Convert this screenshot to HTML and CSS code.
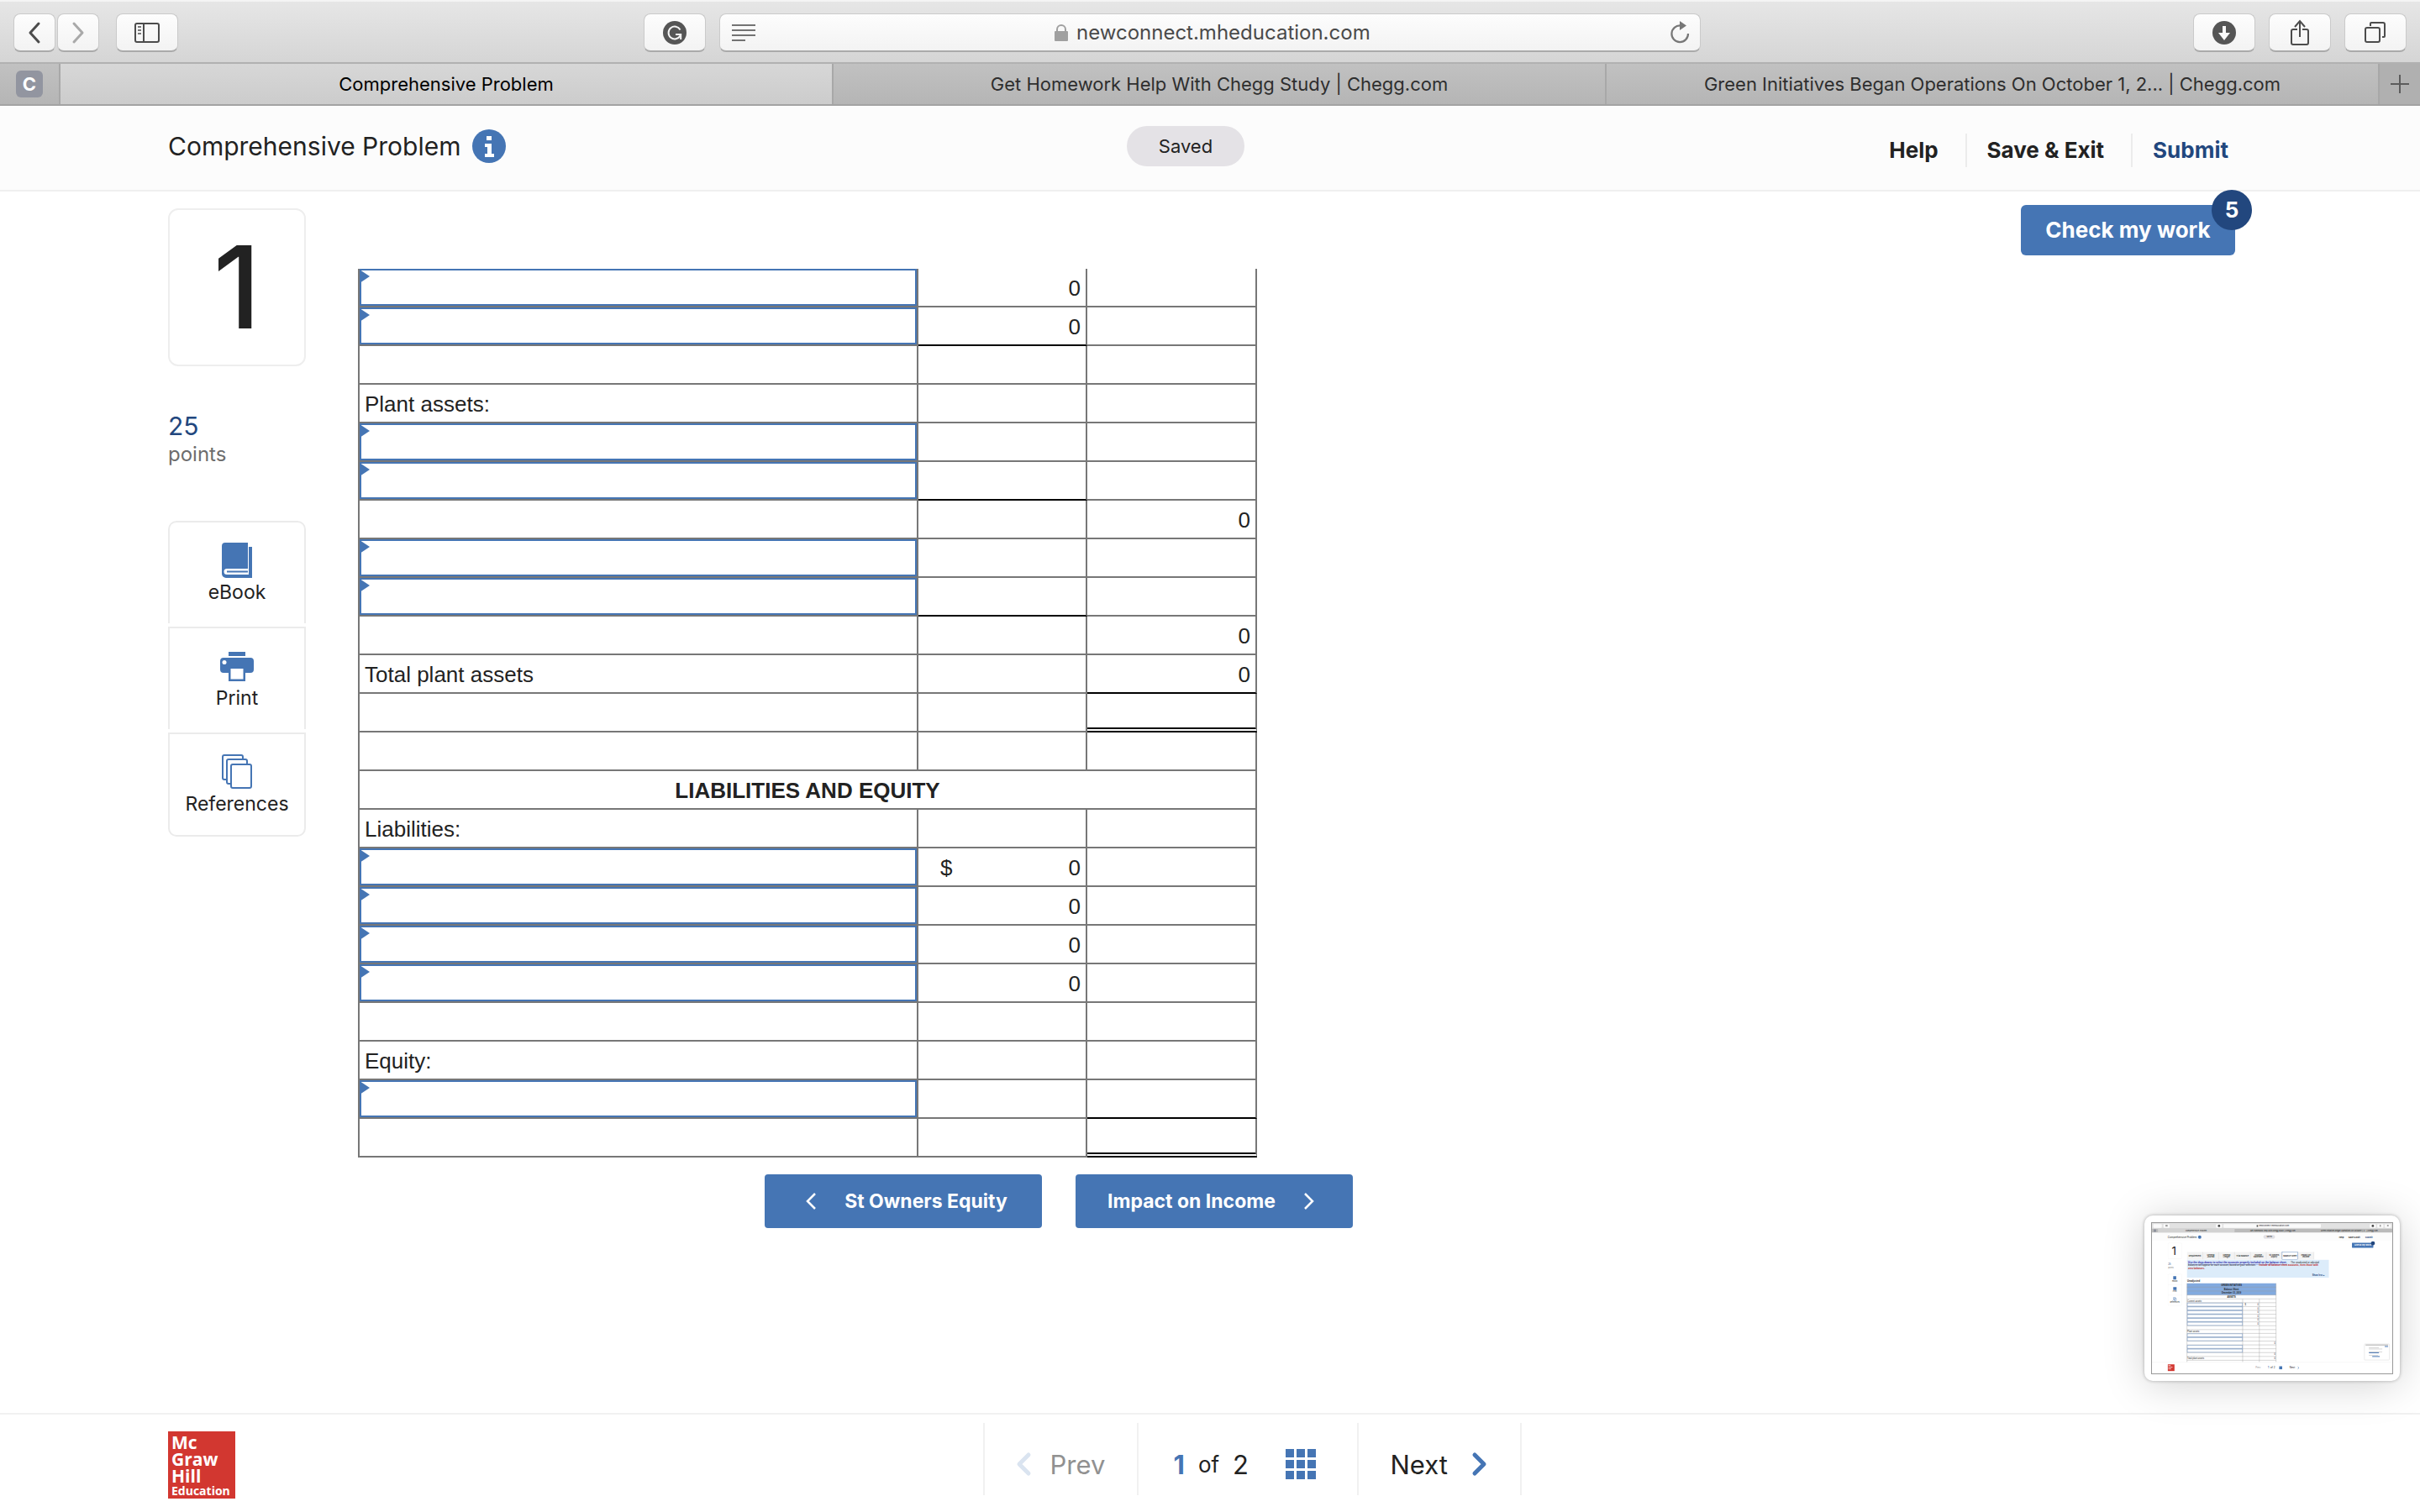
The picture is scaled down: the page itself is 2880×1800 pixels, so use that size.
FILE: index.html
```html
<!DOCTYPE html>
<html lang="en">
<head>
<meta charset="utf-8">
<title>Comprehensive Problem</title>
<link rel="stylesheet" href="styles.css">
</head>
<body>
<div class="toolbar">
  <div class="tools tools-left">
    <div class="history">
      <button class="tool narrow" aria-label="Back"><svg width="50" height="46" viewBox="0 0 50 46"><path d="M30 12 20 23l10 11" fill="none" stroke="#4c4c4c" stroke-width="3" stroke-linecap="round" stroke-linejoin="round"/></svg></button>
      <button class="tool narrow" aria-label="Forward"><svg width="50" height="46" viewBox="0 0 50 46"><path d="M20 12l10 11-10 11" fill="none" stroke="#a9a9a9" stroke-width="3" stroke-linecap="round" stroke-linejoin="round"/></svg></button>
    </div>
    <button class="tool" aria-label="Show sidebar"><svg width="30" height="24" viewBox="0 0 30 24"><rect x="1" y="1" width="28" height="22" rx="2" fill="none" stroke="#4c4c4c" stroke-width="2"/><path d="M11 1v22" stroke="#4c4c4c" stroke-width="2"/><path d="M4 5h4M4 9h4M4 13h4" stroke="#777" stroke-width="2"/></svg></button>
    <button class="tool grammar" aria-label="Grammar check"><svg width="28" height="28" viewBox="0 0 28 28"><circle cx="14" cy="14" r="14" fill="#555"/><path d="M20.500 10.500A7.400 7.400 0 1 0 20.500 17.500M15 16h6.200v6" fill="none" stroke="#f5f5f5" stroke-width="2"/></svg></button>
  </div>
  <div class="address">
    <svg width="30" height="22" viewBox="0 0 30 22"><path d="M0 2h28M0 8h28M0 14h28M0 20h16" stroke="#737373" stroke-width="2"/></svg>
    <label class="site"><svg width="16" height="20" viewBox="0 0 16 20"><path d="M3 9V6a5 5 0 0 1 10 0v3" fill="none" stroke="#a0a0a0" stroke-width="2"/><rect y="8" width="16" height="12" rx="1" fill="#a0a0a0"/></svg><input class="url" type="text" value="newconnect.mheducation.com" aria-label="Address"></label>
    <button class="reload" aria-label="Reload"><svg width="24" height="28" viewBox="0 0 24 28"><path d="M22 15A9.800 9.800 0 1 1 13 5.500" fill="none" stroke="#777" stroke-width="2.200"/><path d="M12 0l8 5.500-8 5.500z" fill="#777"/></svg></button>
  </div>
  <div class="tools tools-right">
    <button class="tool" aria-label="Downloads"><svg width="28" height="28" viewBox="0 0 28 28"><circle cx="14" cy="14" r="14" fill="#555"/><path d="M12 6h4v8h5l-7 9-7-9h5z" fill="#fafafa"/></svg></button>
    <button class="tool" aria-label="Share"><svg width="24" height="32" viewBox="0 0 24 32"><path d="M9 12H4q-2 0-2 2v14q0 2 2 2h16q2 0 2-2V14q0-2-2-2h-5M12 21V3M6 9l6-7 6 7" fill="none" stroke="#4c4c4c" stroke-width="2"/></svg></button>
    <button class="tool" aria-label="Tab overview"><svg width="26" height="26" viewBox="0 0 26 26"><rect x="1" y="7" width="17" height="17" rx="2" fill="none" stroke="#4c4c4c" stroke-width="2"/><path d="M7 5V2q0-1 1-1h14q2 0 2 2v14q0 1-1 1h-2" fill="none" stroke="#4c4c4c" stroke-width="2"/></svg></button>
  </div>
</div>
<nav class="tabs" aria-label="Browser tabs">
  <a class="pinned" href="#"><span>C</span></a>
  <a class="tab active" href="#">Comprehensive Problem</a>
  <a class="tab" href="#">Get Homework Help With Chegg Study | Chegg.com</a>
  <a class="tab" href="#">Green Initiatives Began Operations On October 1, 2... | Chegg.com</a>
  <button class="new-tab" aria-label="New tab"><svg width="22" height="22" viewBox="0 0 22 22"><path d="M11 0v22M0 11h22" stroke="#5c5c5c" stroke-width="2"/></svg></button>
</nav>

<header class="header">
  <h1 class="title">Comprehensive Problem
    <svg width="40" height="40" viewBox="0 0 40 40"><circle cx="20" cy="20" r="20" fill="#4575b4"/><path d="M17 8h6v5h-6zM15 17h8v12h3v4H15v-4h3v-8h-3z" fill="#fff"/></svg>
  </h1>
  <span class="saved">Saved</span>
  <nav class="actions">
    <a href="#">Help</a>
    <a href="#">Save &amp; Exit</a>
    <a class="submit" href="#">Submit</a>
  </nav>
</header>

<main class="main">
  <aside class="side">
    <div class="number">1</div>
    <div class="points"><strong>25</strong><span>points</span></div>
    <nav class="menu">
      <a href="#"><svg width="36" height="42" viewBox="0 0 36 42"><path d="M4 0h27v31H6a3 3 0 0 0 0 7h26V5h4v37H5a5 5 0 0 1-5-5V4a4 4 0 0 1 4-4z" fill="#4575b4"/><path d="M6 34.500h25" stroke="#4575b4" stroke-width="2"/></svg>eBook</a>
      <a href="#"><svg width="40" height="42" viewBox="0 0 40 42"><path d="M10 4h20v5H10zM4 11h32a4 4 0 0 1 4 4v10a4 4 0 0 1-4 4h-6v10H10V29H4a4 4 0 0 1-4-4V15a4 4 0 0 1 4-4z" fill="#4575b4"/><path d="M12.500 24h15v12.500h-15z" fill="#fff"/><circle cx="5" cy="16.500" r="2.500" fill="#fff"/></svg>Print</a>
      <a href="#"><svg width="36" height="42" viewBox="0 0 36 42"><g fill="#fff" stroke="#4575b4" stroke-width="2"><rect x="1" y="1" width="24" height="29" rx="2"/><rect x="6" y="6" width="24" height="29" rx="2"/><rect x="11" y="12" width="24" height="28" rx="2"/></g></svg>References</a>
    </nav>
  </aside>

  <section class="work">
    <table class="sheet">
      <colgroup><col class="account"><col class="amount"><col class="total"></colgroup>
      <tbody>
        <tr><td class="pick"><select aria-label="Current asset account"><option></option></select></td><td class="num">0</td><td></td></tr>
        <tr><td class="pick"><select aria-label="Current asset account"><option></option></select></td><td class="num sum">0</td><td></td></tr>
        <tr><td></td><td></td><td></td></tr>
        <tr><td>Plant assets:</td><td></td><td></td></tr>
        <tr><td class="pick"><select aria-label="Plant asset account"><option></option></select></td><td></td><td></td></tr>
        <tr><td class="pick"><select aria-label="Plant asset account"><option></option></select></td><td class="sum"></td><td></td></tr>
        <tr><td></td><td></td><td class="num">0</td></tr>
        <tr><td class="pick"><select aria-label="Plant asset account"><option></option></select></td><td></td><td></td></tr>
        <tr><td class="pick"><select aria-label="Plant asset account"><option></option></select></td><td class="sum"></td><td></td></tr>
        <tr><td></td><td></td><td class="num">0</td></tr>
        <tr><td>Total plant assets</td><td></td><td class="num sum">0</td></tr>
        <tr><td></td><td></td><td class="grand"></td></tr>
        <tr><td></td><td></td><td></td></tr>
        <tr><th colspan="3">LIABILITIES AND EQUITY</th></tr>
        <tr><td>Liabilities:</td><td></td><td></td></tr>
        <tr><td class="pick"><select aria-label="Liability account"><option></option></select></td><td class="num"><div class="money"><span>$</span><span>0</span></div></td><td></td></tr>
        <tr><td class="pick"><select aria-label="Liability account"><option></option></select></td><td class="num">0</td><td></td></tr>
        <tr><td class="pick"><select aria-label="Liability account"><option></option></select></td><td class="num">0</td><td></td></tr>
        <tr><td class="pick"><select aria-label="Liability account"><option></option></select></td><td class="num">0</td><td></td></tr>
        <tr><td></td><td></td><td></td></tr>
        <tr><td>Equity:</td><td></td><td></td></tr>
        <tr><td class="pick"><select aria-label="Equity account"><option></option></select></td><td></td><td class="sum"></td></tr>
        <tr><td></td><td></td><td class="grand"></td></tr>
      </tbody>
    </table>
    <div class="steps">
      <button class="step back"><svg width="12" height="20" viewBox="0 0 12 20"><path d="M11 1 2 10l9 9" fill="none" stroke="#fff" stroke-width="2.500"/></svg>St Owners Equity</button>
      <button class="step forward">Impact on Income<svg width="12" height="20" viewBox="0 0 12 20"><path d="M1 1l9 9-9 9" fill="none" stroke="#fff" stroke-width="2.500"/></svg></button>
    </div>
  </section>

  <button class="check">Check my work<span class="badge">5</span></button>
</main>

<footer class="footer">
  <div class="logo">Mc<br>Graw<br>Hill<br><small>Education</small></div>
  <nav class="pager">
    <button class="prev" disabled><svg width="20" height="30" viewBox="0 0 20 30"><path d="M16 4 5 15l11 11" fill="none" stroke="#dae4f0" stroke-width="5" stroke-linecap="round" stroke-linejoin="round"/></svg>Prev</button>
    <div class="pages"><strong>1</strong><span class="of">of</span><span>2</span><svg width="36" height="36" viewBox="0 0 36 36"><path d="M0 0h10v10H0zM13 0h10v10H13zM26 0h10v10H26zM0 13h10v10H0zM13 13h10v10H13zM26 13h10v10H26zM0 26h10v10H0zM13 26h10v10H13zM26 26h10v10H26z" fill="#4575b4"/></svg></div>
    <button class="next">Next<svg width="20" height="30" viewBox="0 0 20 30"><path d="M4 4l11 11L4 26" fill="none" stroke="#4575b4" stroke-width="5" stroke-linecap="round" stroke-linejoin="round"/></svg></button>
  </nav>
</footer>

<div class="preview">
  <svg viewBox="0 0 2880 1800" font-family="Inter, sans-serif" font-size="28" fill="#222">
    <rect width="2880" height="1800" fill="#fff"/>
    <rect width="2880" height="66" fill="#e2e2e2"/>
    <rect y="66" width="2880" height="50" fill="#bbb"/>
    <rect x="72" y="66" width="918" height="50" fill="#d2d2d2"/>
    <g fill="#fbfbfb"><rect x="16" y="12" width="102" height="45" rx="8"/><rect x="138" y="12" width="74" height="45" rx="8"/><rect x="767" y="12" width="74" height="45" rx="8"/><rect x="857" y="12" width="1167" height="45" rx="8"/><rect x="2610" y="12" width="74" height="45" rx="8"/><rect x="2700" y="12" width="74" height="45" rx="8"/><rect x="2790" y="12" width="74" height="45" rx="8"/></g>
    <g fill="#444"><circle cx="804" cy="34" r="14"/><circle cx="2647" cy="34" r="14"/><rect x="1255" y="25" width="16" height="20"/><rect x="2728" y="22" width="16" height="22" fill="#999"/><rect x="2818" y="22" width="18" height="18" fill="#999"/><rect x="162" y="22" width="26" height="20" fill="#999"/><rect x="20" y="76" width="30" height="30" fill="#8c909c"/></g>
    <text x="1281" y="45" font-size="25">newconnect.mheducation.com</text>
    <g font-size="22"><text x="402" y="100">Comprehensive Problem</text><text x="1178" y="100">Get Homework Help With Chegg Study | Chegg.com</text><text x="2024" y="100">Green Initiatives Began Operations On October 1, 2... | Chegg.com</text></g>
    <rect y="116" width="2880" height="100" fill="#fcfcfc"/>
    <text x="190" y="180" font-size="30">Comprehensive Problem</text><circle cx="572" cy="168" r="20" fill="#4575b4"/>
    <rect x="1335" y="144" width="140" height="46" rx="23" fill="#e3e1e5"/><text x="1374" y="176" font-size="22">Saved</text>
    <g font-weight="700" font-size="26"><text x="2242" y="183">Help</text><text x="2355" y="183">Save &amp; Exit</text><text x="2555" y="183" fill="#22477e">Submit</text></g>
    <rect x="2397" y="236" width="256" height="60" rx="4" fill="#4575b4"/><text x="2426" y="276" fill="#fff" font-weight="700" font-size="27">Check my work</text><circle cx="2648" cy="242" r="24" fill="#22477e"/>
    <rect x="193" y="240" width="164" height="188" rx="10" fill="none" stroke="#eee" stroke-width="3"/><text x="236" y="384" font-size="136">1</text>
    <text x="193" y="508" fill="#22477e">25</text><text x="193" y="542" font-size="23" fill="#777">points</text>
    <rect x="193" y="612" width="164" height="376" rx="10" fill="none" stroke="#eee" stroke-width="3"/><path d="M193 738h164M193 864h164" stroke="#eee" stroke-width="3"/>
    <path d="M255 638h36v40h-36zM255 768h40v34h-40z" fill="#4575b4"/><path d="M257 892h24v28h-24zM267 902h24v28h-24z" fill="none" stroke="#4575b4" stroke-width="4"/>
    <g font-size="22" text-anchor="middle"><text x="274" y="704">eBook</text><text x="274" y="830">Print</text><text x="274" y="956">References</text></g>
    <path d="M420 347h1520v90H420z" fill="#f3f3f3"/><path d="M610 347v90M800 347v90M990 347v90M1180 347v90M1370 347v90M1560 347v90M1750 347v90M1940 347v90" stroke="#ccc" stroke-width="3"/>
    <rect x="1560" y="347" width="190" height="94" fill="#fff" stroke="#4575b4" stroke-width="4"/>
    <g font-size="24" font-weight="600" text-anchor="middle"><text x="515" y="405">Requirement</text><text x="705" y="388">General</text><text x="705" y="416">Journal</text><text x="895" y="388">General</text><text x="895" y="416">Ledger</text><text x="1085" y="405">Trial Balance</text><text x="1275" y="388">Income</text><text x="1275" y="416">Statement</text><text x="1465" y="388">St Owners</text><text x="1465" y="416">Equity</text><text x="1655" y="405">Balance Sheet</text><text x="1845" y="388">Impact on</text><text x="1845" y="416">Income</text></g>
    <rect x="420" y="441" width="1700" height="214" fill="#dcecfa"/>
    <g font-family="Liberation Sans, sans-serif" font-size="26"><text x="434" y="486" font-size="30" fill="#22a" font-weight="700" text-decoration="underline">Use the drop-downs to select the accounts properly included on the balance sheet.</text><text x="1665" y="486" font-size="28">The unadjusted or adjusted</text><text x="434" y="518" font-size="29">balances will appear for each account, based on your selection.</text><text x="1285" y="518" font-size="29" fill="#b22" font-weight="700">Include all balance sheet accounts, even those with</text><text x="434" y="552" font-size="29" fill="#b22" font-weight="700">zero balances.</text><text x="1920" y="632" fill="#22477e" font-weight="700">Show less▲</text>
    <text x="424" y="700" font-weight="700" font-size="28">Unadjusted</text>
    <path d="M420 723h1067v140H420z" fill="#82aadf"/>
    <g font-weight="700" text-anchor="middle"><text x="953" y="756">GREEN INITIATIVES</text><text x="953" y="802">Balance Sheet</text><text x="953" y="848">December 31, 2019</text><text x="953" y="894">ASSETS</text></g>
    <path d="M420 723V1667M1487 723V1667M1087 909V1667M1287 909V1667M420 769h1067M420 815h1067M420 863h1067M420 909h1067M420 955h1067M420 1001h1067M420 1047h1067M420 1093h1067M420 1139h1067M420 1185h1067M420 1231h1067M420 1277h1067M420 1323h1067M420 1369h1067M420 1415h1067M420 1461h1067M420 1507h1067M420 1553h1067M420 1599h1067M420 1645h1067" fill="none" stroke="#999" stroke-width="4"/>
    <path d="M424 959h660v38H424zM424 1005h660v38H424zM424 1051h660v38H424zM424 1097h660v38H424zM424 1143h660v38H424zM424 1189h660v38H424zM424 1327h660v38H424zM424 1373h660v38H424zM424 1465h660v38H424zM424 1511h660v38H424z" fill="none" stroke="#4575b4" stroke-width="4"/>
    <text x="424" y="942">Current assets:</text><text x="424" y="1310">Plant assets:</text><text x="424" y="1632">Total plant assets</text>
    <text x="1112" y="988">$</text><text x="1264" y="988">0</text><text x="1264" y="1034">0</text><text x="1264" y="1080">0</text><text x="1264" y="1126">0</text><text x="1264" y="1172">0</text><text x="1264" y="1218">0</text><text x="1466" y="1448">0</text><text x="1466" y="1586">0</text><text x="1466" y="1632">0</text></g>
    <rect x="2546" y="1450" width="300" height="192" rx="8" fill="#fff" stroke="#ddd" stroke-width="6"/><path d="M2560 1462h270" stroke="#999" stroke-width="8"/><path d="M2600 1495h120M2600 1510h160M2600 1545h160M2600 1585h110" stroke="#bbb" stroke-width="6"/><path d="M2600 1555h120M2640 1600h90M2790 1480h40" stroke="#4575b4" stroke-width="10"/>
    <path d="M0 1668h2880" stroke="#eee" stroke-width="4"/>
    <rect x="190" y="1694" width="80" height="80" fill="#d23730"/><path d="M196 1708h28M196 1728h50M196 1748h34" stroke="#f3c4c2" stroke-width="10"/>
    <g font-size="30"><text x="1240" y="1746" fill="#999">Prev</text><text x="1390" y="1746" fill="#4575b4" font-weight="700">1</text><text x="1420" y="1746">of 2</text><rect x="1525" y="1717" width="36" height="36" fill="#4575b4"/><text x="1648" y="1746">Next</text></g><path d="M1748 1724l14 12-14 12" fill="none" stroke="#4575b4" stroke-width="6"/>
  </svg>
</div>
</body>
</html>
```
FILE: styles.css
```css
* { box-sizing: border-box; }
body {
  margin: 0;
  min-height: 100vh;
  display: flex;
  flex-direction: column;
  background: #fff;
  color: #222;
  font-family: Inter, "Noto Sans", sans-serif;
  font-size: 24px;
}
a { color: inherit; text-decoration: none; }
button { font: inherit; color: inherit; border: 0; padding: 0; margin: 0; background: none; }
svg { display: block; flex: none; }

/* browser toolbar */
.toolbar {
  display: grid;
  grid-template-columns: 1fr 41% 1fr;
  align-items: center;
  column-gap: 16px;
  height: 76px;
  padding: 2px 16px 0;
  background: linear-gradient(#e6e6e6, #d5d5d5);
  border-top: 2px solid #f4f4f4;
  border-bottom: 2px solid #b1b1b1;
}
.tools { display: flex; align-items: center; }
.history { display: flex; gap: 2px; margin-right: 20px; }
.grammar { margin-left: auto; }
.tools-right { justify-content: flex-end; gap: 16px; }
.tool, .address {
  height: 46px;
  border: 1px solid #cacaca;
  border-bottom: 2px solid #aaa;
  border-radius: 8px;
  background: linear-gradient(#fdfdfd, #f3f3f3);
}
.tool { display: flex; align-items: center; justify-content: center; width: 74px; }
.narrow { width: 50px; }
.address { display: flex; align-items: center; justify-content: space-between; padding: 0 12px 0 14px; }
.site { display: flex; align-items: center; gap: 10px; }
.url {
  width: 352px;
  padding: 0;
  border: 0;
  background: none;
  color: #4a4a4a;
  font: 24px/32px Inter, sans-serif;
}

/* browser tabs */
.tabs {
  display: flex;
  height: 50px;
  background: linear-gradient(#c1c1c1, #b5b5b5);
  border-bottom: 2px solid #a3a3a3;
  color: #2e2e2e;
  font-size: 22px;
  line-height: 48px;
}
.pinned { display: flex; align-items: center; justify-content: center; width: 72px; border-right: 2px solid #a8a8a8; }
.pinned span {
  width: 32px;
  border-radius: 6px;
  background: #9295a0;
  color: #fff;
  font-weight: 700;
  line-height: 32px;
  text-align: center;
}
.tab { flex: 1; border-right: 2px solid #a8a8a8; text-align: center; }
.active { background: linear-gradient(#d7d7d7, #ccc); color: #000; }
.new-tab { display: flex; align-items: center; justify-content: center; width: 48px; background: #b0b0b0; }

/* assignment header */
.header {
  display: grid;
  grid-template-columns: 38fr 140px 39fr;
  align-items: center;
  height: 102px;
  padding: 0 228px 0 200px;
  background: #fcfcfc;
  border-bottom: 2px solid #efefef;
}
.title { display: flex; align-items: center; gap: 14px; margin: 0 0 4px; font-size: 30px; font-weight: 400; }
.saved {
  margin-bottom: 4px;
  border-radius: 24px;
  background: #e4e2e6;
  font-size: 22px;
  line-height: 48px;
  text-align: center;
}
.actions { display: flex; justify-content: flex-end; padding-top: 6px; font-weight: 700; font-size: 26px; line-height: 40px; }
.actions a + a { margin-left: 32px; padding-left: 24px; border-left: 2px solid #ececec; }
.actions .submit { color: #22477e; }

/* question body */
.main { flex: 1; display: flex; align-items: flex-start; padding: 20px 220px 0 200px; }
.side { width: 164px; margin-right: 62px; }
.number {
  height: 188px;
  border: 2px solid #eee;
  border-radius: 12px;
  font-size: 136px;
  font-weight: 500;
  line-height: 184px;
  text-align: center;
}
.points { display: flex; flex-direction: column; height: 76px; margin: 54px 0; color: #6d6d6d; line-height: 34px; }
.points strong { color: #22477e; font-size: 30px; font-weight: 400; }
.points span { font-size: 24px; }
.menu { display: flex; flex-direction: column; gap: 4px; }
.menu a {
  display: flex;
  flex-direction: column;
  align-items: center;
  height: 122px;
  padding-top: 24px;
  border: 2px solid #ebebeb;
  border-bottom: 0;
  font-size: 23px;
  line-height: 34px;
}
.menu a:first-child { border-radius: 10px 10px 0 0; }
.menu a:last-child { height: 124px; border-bottom: 2px solid #ebebeb; border-radius: 0 0 10px 10px; }

.work { width: 1668px; margin-top: 72px; }
.sheet {
  table-layout: fixed;
  width: 1070px;
  border-collapse: separate;
  border-spacing: 0;
  font: 26px/32px "Liberation Sans", Arial, sans-serif;
}
.account { width: 667px; }
.amount { width: 201px; }
.total { width: 202px; }
.sheet td, .sheet th {
  height: 46px;
  padding: 2px 6px 0;
  border-right: 2px solid #777;
  border-bottom: 2px solid #777;
}
.sheet td:first-child, .sheet th:first-child { border-left: 2px solid #777; }
.sheet .num { text-align: right; }
.sheet .sum { border-bottom-color: #000; }
.sheet .grand { border-bottom: 6px double #000; }
.money { display: flex; justify-content: space-between; padding-left: 20px; }
.sheet .pick { position: relative; padding: 0; }
.pick::before {
  content: "";
  position: absolute;
  left: 0;
  top: 1px;
  border: 8px solid transparent;
  border-left: 12px solid #4575b4;
  border-right: 0;
}
.pick select {
  display: block;
  width: 100%;
  height: 44px;
  padding: 0 14px;
  appearance: none;
  border: 2px solid #4575b4;
  border-radius: 0;
  background: #fff;
  font: inherit;
}
.steps { display: flex; justify-content: center; gap: 40px; margin-top: 20px; }
.step {
  display: flex;
  align-items: center;
  justify-content: center;
  gap: 34px;
  width: 330px;
  height: 64px;
  border-radius: 4px;
  background: #4575b4;
  color: #fff;
  font-size: 23px;
  font-weight: 700;
}
.back { padding-left: 8px; }
.forward { padding-right: 8px; }
.check {
  position: relative;
  width: 255px;
  height: 60px;
  margin: -4px 0 0 auto;
  padding-bottom: 2px;
  border-radius: 6px;
  background: #4575b4;
  color: #fff;
  font-size: 26px;
  font-weight: 700;
}
.badge {
  position: absolute;
  top: -18px;
  right: -20px;
  width: 48px;
  border-radius: 50%;
  background: #22477e;
  line-height: 48px;
}

/* footer */
.footer {
  display: grid;
  grid-template-columns: 1fr auto 1fr;
  align-items: start;
  height: 118px;
  padding: 10px 100px 0 200px;
  border-top: 2px solid #f1f1f1;
}
.logo {
  width: 80px;
  height: 80px;
  margin-top: 10px;
  padding: 3px 4px;
  background: #d23730;
  color: #fff;
  font: 700 21px/20px "Open Sans", sans-serif;
}
.logo small { display: block; font-size: 14px; line-height: 16px; }
.pager { display: flex; height: 86px; border: solid #f1f1f1; border-width: 0 2px; font-size: 31px; }
.pager button, .pages { display: flex; align-items: center; padding-top: 12px; }
.prev { width: 181px; padding-left: 36px; gap: 22px; color: #919191; }
.prev + .pages { width: 264px; padding-left: 42px; border: solid #f1f1f1; border-width: 0 2px; }
.pages strong { color: #4575b4; }
.pages svg { margin-left: 44px; }
.of { margin: 0 16px; font-size: 26px; }
.next { width: 192px; padding-left: 38px; gap: 28px; }

/* screenshot thumbnail */
.preview {
  position: fixed;
  right: 24px;
  bottom: 156px;
  width: 304px;
  padding: 8px;
  border-radius: 10px;
  background: #fff;
  box-shadow: 0 0 4px rgba(0, 0, 0, 0.3), 0 4px 50px rgba(0, 0, 0, 0.18);
}
.preview svg { width: 100%; border: 1px solid #999; }
```
